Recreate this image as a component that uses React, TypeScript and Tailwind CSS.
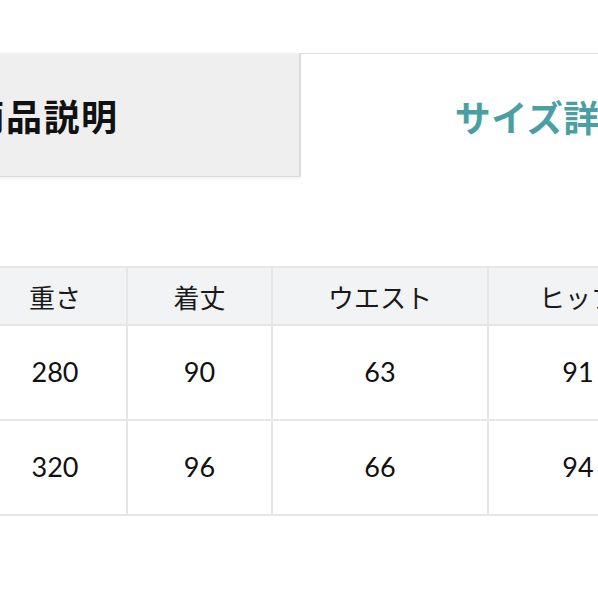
import React from 'react';

const headers = ['重さ', '着丈', 'ウエスト', 'ヒップ'];
const rows = [
  ['280', '90', '63', '91'],
  ['320', '96', '66', '94'],
];

const App: React.FC = () => {
  return (
    <div className="w-[598px] h-[598px] overflow-hidden bg-white font-['Lato','Noto_Sans_CJK_JP',sans-serif] text-[#222]">
      {/* Tabs */}
      <div className="pt-[53px] ml-[-200px] flex w-[1000px]">
        <div className="w-[500px] h-[124px] bg-[#efefef] border-r border-b border-[#dcdcdc] shadow-[1px_1px_3px_rgba(0,0,0,0.08)] flex items-center justify-center pr-[12px]">
          <span className="text-[36px] font-bold tracking-[1.5px] text-[#111] font-['Noto_Sans_CJK_JP',sans-serif]">商品説明</span>
        </div>
        <div className="w-[490px] h-[124px] bg-white border-t border-l border-[#dedede] flex items-center justify-center">
          <span className="text-[36px] font-bold tracking-[0.5px] text-[#4a9fa3] font-['Noto_Sans_CJK_JP',sans-serif]">サイズ詳細</span>
        </div>
      </div>

      {/* Size table */}
      <div className="mt-[89px] ml-[-18px] w-fit grid grid-cols-[142px_143px_214px_178px] gap-[2px] p-[2px] bg-[#e6e6e6]">
        {headers.map(h => (
          <div key={h} className="h-[56px] bg-[#f1f3f5] flex items-center justify-center text-[26px] font-['Noto_Sans_CJK_JP',sans-serif] text-[#1a1a1a]">
            {h}
          </div>
        ))}
        {rows.map((r, i) =>
          r.map((v, j) => (
            <div key={`${i}-${j}`} className="h-[93px] bg-white flex items-center justify-center text-[27px] font-['Lato',sans-serif] text-[#111]">
              {v}
            </div>
          ))
        )}
      </div>
    </div>
  );
};

export default App;
